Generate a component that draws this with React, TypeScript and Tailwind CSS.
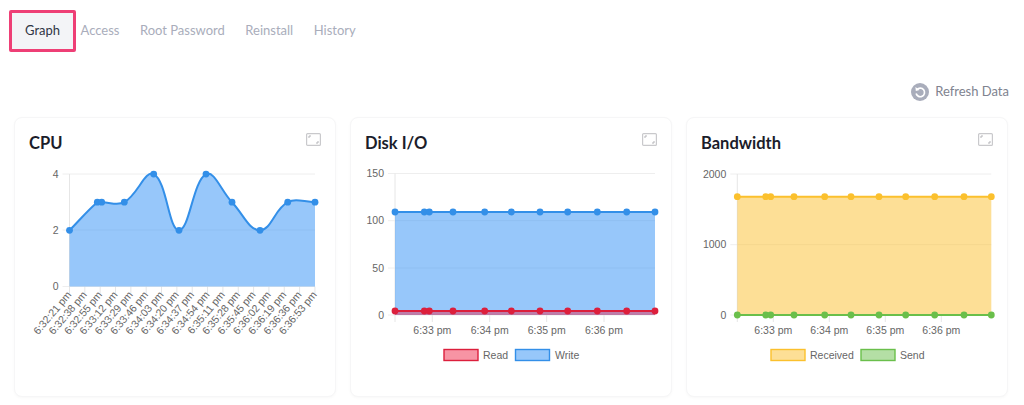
const chartFont = '"Liberation Sans", Arial, sans-serif'

type Series = {
  color: string
  fill: string
  ys: number[]
}

type ChartProps = {
  title: string
  left: number
  right: number
  top: number
  base: number
  xs: number[]
  yTicks: { label: string; y: number }[]
  series: Series[]
  xTicks?: { label: string; x: number }[]
  rotated?: { label: string; x: number }[]
  legend?: { label: string; color: string; fill: string; x: number; tx: number }[]
  originX: number
}

function spline(xs: number[], ys: number[]) {
  const t = 0.4
  const cps = xs.map((x, i) => {
    const px = xs[Math.max(i - 1, 0)], py = ys[Math.max(i - 1, 0)]
    const nx = xs[Math.min(i + 1, xs.length - 1)], ny = ys[Math.min(i + 1, xs.length - 1)]
    const d01 = Math.hypot(x - px, ys[i] - py)
    const d12 = Math.hypot(nx - x, ny - ys[i])
    const sum = d01 + d12 || 1
    const fa = (t * d01) / sum
    const fb = (t * d12) / sum
    return {
      ax: x - fa * (nx - px),
      ay: ys[i] - fa * (ny - py),
      bx: x + fb * (nx - px),
      by: ys[i] + fb * (ny - py),
    }
  })
  let d = `M${xs[0]} ${ys[0]}`
  for (let i = 1; i < xs.length; i++) {
    d += ` C${cps[i - 1].bx} ${cps[i - 1].by} ${cps[i].ax} ${cps[i].ay} ${xs[i]} ${ys[i]}`
  }
  return d
}

function ExpandIcon() {
  return (
    <svg width="15" height="13" viewBox="0 0 15 13" fill="none">
      <rect x="0.6" y="0.6" width="13.8" height="11.8" rx="1" stroke="#c9c9cc" strokeWidth="1.2" />
      <path d="M3 5V3H5" stroke="#b5b5b9" strokeWidth="1" />
      <path d="M12 8V10H10" stroke="#b5b5b9" strokeWidth="1" />
    </svg>
  )
}

function RefreshIcon() {
  return (
    <svg width="18" height="18" viewBox="0 0 18 18" fill="none">
      <circle cx="9" cy="9" r="9" fill="#a9adbb" />
      <path d="M6 6.6A4.3 4.3 0 1 1 5.1 10.6" stroke="#fff" strokeWidth="1.7" fill="none" />
      <path d="M4.4 4L4.8 8L8.6 7.1Z" fill="#fff" />
    </svg>
  )
}

function ChartCard({ title, left, right, top, base, xs, yTicks, series, xTicks, rotated, legend, originX }: ChartProps) {
  return (
    <div className="w-[322px] h-[280px] shrink-0 rounded-lg border border-[#f6f6f7] bg-white shadow-[0_1px_3px_rgba(0,0,0,0.03)]">
      <div className="flex items-start justify-between pl-[14px] pr-[14px] pt-[15px] h-[42px]">
        <h3 className="text-[16.5px] leading-[20px] font-bold text-[#1b1d2a]">{title}</h3>
        <ExpandIcon />
      </div>
      <svg width="320" height="236" viewBox={`${originX} 160 320 236`} className="block">
        {yTicks.map(t => (
          <g key={t.label}>
            <line x1={left - 7} x2={right} y1={t.y} y2={t.y} stroke="#eeeeee" strokeWidth="1" />
            <text x={left - 11} y={t.y + 3.6} textAnchor="end" fontSize="10.5" fill="#666" fontFamily={chartFont}>{t.label}</text>
          </g>
        ))}
        <line x1={left} x2={left} y1={top} y2={base + 7} stroke="#e6e6e6" strokeWidth="1" />
        {xTicks?.map(t => (
          <g key={t.label}>
            <line x1={t.x} x2={t.x} y1={base} y2={base + 7} stroke="#e6e6e6" strokeWidth="1" />
            <text x={t.x} y={334} textAnchor="middle" fontSize="10.5" fill="#666" fontFamily={chartFont}>{t.label}</text>
          </g>
        ))}
        {rotated?.map(t => (
          <g key={t.label}>
            <line x1={t.x} x2={t.x} y1={base} y2={base + 7} stroke="#e6e6e6" strokeWidth="1" />
            <text
              transform={`translate(${t.x + 2.5} 295) rotate(-50)`}
              textAnchor="end"
              fontSize="10.5"
              fill="#666"
              fontFamily={chartFont}
            >
              {t.label}
            </text>
          </g>
        ))}
        {series.map(s => {
          const line = spline(xs, s.ys)
          return (
            <g key={s.color}>
              <path d={`${line} L${xs[xs.length - 1]} ${base} L${xs[0]} ${base} Z`} fill={s.fill} />
              <path d={line} fill="none" stroke={s.color} strokeWidth="2" />
              {xs.map((x, i) => (
                <circle key={i} cx={x} cy={s.ys[i]} r="3.4" fill={s.color} />
              ))}
            </g>
          )
        })}
        {legend?.map(l => (
          <g key={l.label}>
            <rect x={l.x} y={349.5} width={34} height={11} fill={l.fill} stroke={l.color} strokeWidth="1.4" />
            <text x={l.tx} y={358.5} fontSize="10.5" fill="#666" fontFamily={chartFont}>{l.label}</text>
          </g>
        ))}
      </svg>
    </div>
  )
}

const blue = '#338fe8'
const blueFill = 'rgba(47,143,245,0.5)'

const cpuY = (v: number) => 286.5 - v * 28.1
const cpuLabels = [
  '6:32:21 pm', '6:32:38 pm', '6:32:55 pm', '6:33:12 pm', '6:33:29 pm', '6:33:46 pm', '6:34:03 pm', '6:34:20 pm',
  '6:34:37 pm', '6:34:54 pm', '6:35:11 pm', '6:35:28 pm', '6:35:45 pm', '6:36:02 pm', '6:36:19 pm', '6:36:36 pm', '6:36:53 pm',
]

const diskXs = [395, 424.3, 429.3, 453, 484.7, 511.3, 540, 567.7, 597.3, 626.7, 655]
const bandXs = [737.3, 765.7, 770.7, 794, 824.7, 851, 879, 905.7, 934.7, 964, 991.3]

export default function App() {
  const tabs = ['Access', 'Root Password', 'Reinstall', 'History']
  return (
    <div className="w-[1024px] h-[405px] overflow-hidden bg-white" style={{ fontFamily: 'Lato, sans-serif' }}>
      <div className="flex items-center pl-[9px] pt-[10px] text-[13px]">
        <div className="w-[67px] h-[42px] flex items-center justify-center border-[3px] border-[#ee3f76] rounded-[2px] bg-[#f3f4f7] text-[#2f3444]">Graph</div>
        <div className="flex gap-[20.5px] ml-[4.5px] text-[#a9adbb]">
          {tabs.map(t => <span key={t}>{t}</span>)}
        </div>
      </div>
      <div className="flex items-center justify-end gap-[6px] pr-[15px] mt-[31px] h-[18px] text-[13px] text-[#80838f]">
        <RefreshIcon />
        <span>Refresh Data</span>
      </div>
      <div className="flex gap-[14px] pl-[14px] mt-[16px]">
        <ChartCard
          title="CPU"
          originX={15}
          left={69.5}
          right={315}
          top={174}
          base={286.5}
          xs={[69.5, 97.3, 101.7, 124.3, 153.7, 179, 206, 232, 260, 287.7, 315]}
          yTicks={[{ label: '4', y: 174 }, { label: '2', y: 230 }, { label: '0', y: 286.5 }]}
          series={[{ color: blue, fill: blueFill, ys: [2, 3, 3, 3, 4, 2, 4, 3, 2, 3, 3].map(cpuY) }]}
          rotated={cpuLabels.map((label, i) => ({ label, x: 69.5 + i * 15.34 }))}
        />
        <ChartCard
          title="Disk I/O"
          originX={351}
          left={395}
          right={655}
          top={173.5}
          base={315}
          xs={diskXs}
          yTicks={[{ label: '150', y: 173.5 }, { label: '100', y: 220.7 }, { label: '50', y: 268 }, { label: '0', y: 315 }]}
          series={[
            { color: blue, fill: blueFill, ys: diskXs.map(() => 212) },
            { color: '#dc1f3c', fill: 'rgba(232,50,85,0.5)', ys: diskXs.map(() => 311) },
          ]}
          xTicks={[
            { label: '6:33 pm', x: 432.3 },
            { label: '6:34 pm', x: 489.7 },
            { label: '6:35 pm', x: 546.7 },
            { label: '6:36 pm', x: 604 },
          ]}
          legend={[
            { label: 'Read', color: '#dc1f3c', fill: 'rgba(240,60,90,0.55)', x: 444, tx: 483 },
            { label: 'Write', color: blue, fill: blueFill, x: 515.5, tx: 555 },
          ]}
        />
        <ChartCard
          title="Bandwidth"
          originX={687}
          left={737.3}
          right={991.3}
          top={174}
          base={315}
          xs={bandXs}
          yTicks={[{ label: '2000', y: 174 }, { label: '1000', y: 244.7 }, { label: '0', y: 315 }]}
          series={[
            { color: '#fbc02d', fill: 'rgba(251,192,45,0.5)', ys: bandXs.map(() => 196.7) },
            { color: '#6abf4b', fill: 'rgba(106,191,75,0.5)', ys: bandXs.map(() => 315) },
          ]}
          xTicks={[
            { label: '6:33 pm', x: 773.3 },
            { label: '6:34 pm', x: 829.3 },
            { label: '6:35 pm', x: 885.3 },
            { label: '6:36 pm', x: 941.3 },
          ]}
          legend={[
            { label: 'Received', color: '#fbc02d', fill: 'rgba(251,192,45,0.5)', x: 771, tx: 810 },
            { label: 'Send', color: '#6abf4b', fill: 'rgba(106,191,75,0.5)', x: 861, tx: 900 },
          ]}
        />
      </div>
    </div>
  )
}
